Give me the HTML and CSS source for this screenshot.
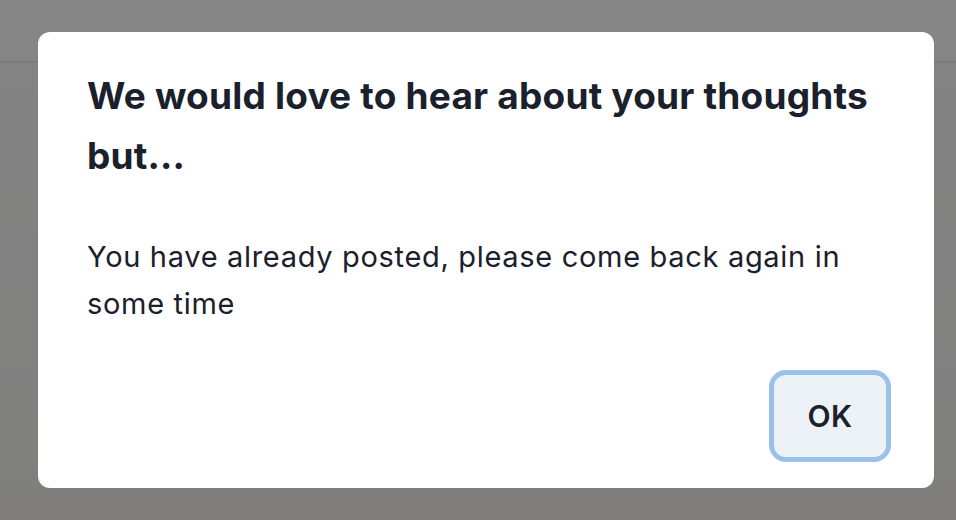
FILE: index.html
```html
<!DOCTYPE html>
<html lang="en">
<head>
<meta charset="utf-8">
<title>Alert</title>
<link rel="stylesheet" href="styles.css">
</head>
<body>
<div class="page">
  <header class="page-header"></header>
  <main class="page-main"></main>
</div>
<div class="overlay">
  <section class="dialog" role="alertdialog" aria-labelledby="dlg-title">
    <h2 class="dialog-title" id="dlg-title">We would love to hear about your thoughts but...</h2>
    <p class="dialog-body">You have already posted, please come back again in some time</p>
    <footer class="dialog-footer">
      <button class="btn-ok" type="button">OK</button>
    </footer>
  </section>
</div>
</body>
</html>
```
FILE: styles.css
```css
* { box-sizing: border-box; }
html, body { margin: 0; padding: 0; }
body {
  width: 956px;
  height: 520px;
  overflow: hidden;
  font-family: Inter, "Noto Sans", "Liberation Sans", sans-serif;
  color: #1a202c;
}
.page {
  display: flex;
  flex-direction: column;
  height: 520px;
  background: #fbfbfb;
}
.page-header {
  height: 63px;
  background: #ffffff;
  border-bottom: 2px solid #ececec;
}
.page-main {
  flex: 1;
  background: linear-gradient(180deg, #fbfbfb 0%, #f5f4f2 100%);
}
.overlay {
  position: fixed;
  inset: 0;
  background: rgba(0, 0, 0, 0.48);
  display: flex;
  justify-content: flex-start;
  align-items: flex-start;
  padding: 32px 0 0 38px;
}
.dialog {
  width: 896px;
  height: 456px;
  background: #ffffff;
  border-radius: 12px;
  padding: 34px 47px 31px 49px;
  display: flex;
  flex-direction: column;
}
.dialog-title {
  margin: 0;
  font-size: 37px;
  line-height: 60px;
  font-weight: 700;
  letter-spacing: 0.2px;
  color: #1a202c;
}
.dialog-body {
  margin: 47px 0 0 0;
  font-size: 29px;
  line-height: 47px;
  font-weight: 400;
  letter-spacing: 0.68px;
  color: #1a202c;
}
.dialog-footer {
  margin-top: auto;
  display: flex;
  justify-content: flex-end;
}
.btn-ok {
  width: 112px;
  height: 82px;
  margin-right: 1px;
  border: none;
  border-radius: 12px;
  background: #edf2f7;
  box-shadow: 0 0 0 5px #99c1ea;
  font-family: Inter, "Noto Sans", "Liberation Sans", sans-serif;
  font-size: 30px;
  font-weight: 600;
  letter-spacing: 0.5px;
  color: #1a202c;
  padding: 0;
}
```
